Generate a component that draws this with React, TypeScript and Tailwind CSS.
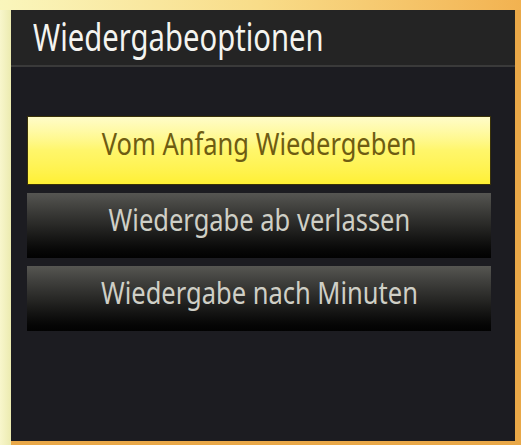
const options = [
  { label: "Vom Anfang Wiedergeben", active: true },
  { label: "Wiedergabe ab verlassen", active: false },
  { label: "Wiedergabe nach Minuten", active: false },
]

function OptionButton({ label, active }: { label: string; active: boolean }) {
  return (
    <div
      className={
        active
          ? "flex h-[69px] items-center justify-center border border-[#3a3208] bg-gradient-to-b from-[#fffcc8] via-[#fff66a] to-[#fff033] pb-[14px]"
          : "flex h-[65px] items-center justify-center bg-gradient-to-b from-[#565652] via-[#282826] to-[#020202] pb-[12px]"
      }
    >
      <span
        className={
          active
            ? "inline-block scale-x-[0.85] text-[30px] leading-none text-[#6e5c12]"
            : "inline-block scale-x-[0.85] text-[30px] leading-none text-[#cfcfc6]"
        }
        style={{ fontFamily: '"Noto Sans", sans-serif' }}
      >
        {label}
      </span>
    </div>
  )
}

export default function App() {
  return (
    <div className="flex h-[445px] w-[521px] flex-col overflow-hidden bg-[#f6f4c4]">
      <div className="h-[10px] shrink-0 bg-gradient-to-r from-[#faf6bc] via-[#f8dc88] to-[#f2b250]" />
      <div className="flex flex-1">
        <div className="w-[11px] shrink-0 bg-gradient-to-r from-[#f8f6cc] to-[#ecebb0]" />
        <div className="flex flex-1 flex-col border-r-[6px] border-b-[4px] border-[#e9a848] bg-[#1c1c21]">
          <div className="flex h-[57px] shrink-0 items-center border-b-2 border-[#3a3a3a] bg-[#242424] pb-[4px] pl-[22px]">
            <span
              className="inline-block origin-left scale-x-[0.77] text-[38px] leading-none text-[#f4f4f0]"
              style={{ fontFamily: '"Noto Sans", sans-serif' }}
            >
              Wiedergabeoptionen
            </span>
          </div>
          <div className="flex flex-col gap-[8px] pt-[49px] pl-[16px] pr-[24px]">
            {options.map((o) => (
              <OptionButton key={o.label} label={o.label} active={o.active} />
            ))}
          </div>
        </div>
      </div>
    </div>
  )
}
